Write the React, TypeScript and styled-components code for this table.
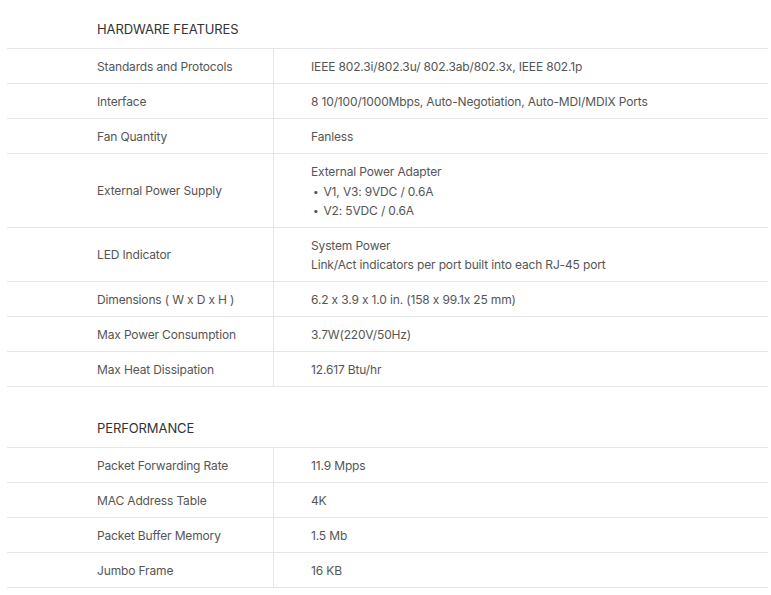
import React from 'react';
import styled, { createGlobalStyle } from 'styled-components';

interface Spec {
  label: string;
  lines: string[];
  bullets?: string[];
}

interface Section {
  title: string;
  specs: Spec[];
}

const sections: Section[] = [
  {
    title: 'HARDWARE FEATURES',
    specs: [
      { label: 'Standards and Protocols', lines: ['IEEE 802.3i/802.3u/ 802.3ab/802.3x, IEEE 802.1p'] },
      { label: 'Interface', lines: ['8 10/100/1000Mbps, Auto-Negotiation, Auto-MDI/MDIX Ports'] },
      { label: 'Fan Quantity', lines: ['Fanless'] },
      {
        label: 'External Power Supply',
        lines: ['External Power Adapter'],
        bullets: ['V1, V3: 9VDC / 0.6A', 'V2: 5VDC / 0.6A'],
      },
      {
        label: 'LED Indicator',
        lines: ['System Power', 'Link/Act indicators per port built into each RJ-45 port'],
      },
      { label: 'Dimensions ( W x D x H )', lines: ['6.2 x 3.9 x 1.0 in. (158 x 99.1x 25 mm)'] },
      { label: 'Max Power Consumption', lines: ['3.7W(220V/50Hz)'] },
      { label: 'Max Heat Dissipation', lines: ['12.617 Btu/hr'] },
    ],
  },
  {
    title: 'PERFORMANCE',
    specs: [
      { label: 'Packet Forwarding Rate', lines: ['11.9 Mpps'] },
      { label: 'MAC Address Table', lines: ['4K'] },
      { label: 'Packet Buffer Memory', lines: ['1.5 Mb'] },
      { label: 'Jumbo Frame', lines: ['16 KB'] },
    ],
  },
];

const GlobalStyle = createGlobalStyle`
  body {
    margin: 0;
    background: #fff;
    font-family: Inter, 'Noto Sans', sans-serif;
  }
`;

const Page = styled.div`
  display: flex;
  flex-direction: column;
  gap: 21px;
  padding: 9px 3px 0 7px;
`;

const Block = styled.section`
  display: flex;
  flex-direction: column;
`;

const Heading = styled.h3`
  margin: 0;
  height: 40px;
  box-sizing: border-box;
  display: flex;
  align-items: center;
  padding: 1px 0 0 90px;
  font-size: 13px;
  font-weight: 400;
  color: #333;
  letter-spacing: -0.1px;
  border-bottom: 1px solid #e6e6ea;
`;

const Row = styled.div`
  display: grid;
  grid-template-columns: 267px 1fr;
  border-bottom: 1px solid #e6e6ea;
  font-size: 12px;
  line-height: 19px;
  color: #555;
  letter-spacing: -0.15px;
`;

const Label = styled.div`
  display: flex;
  align-items: center;
  padding: 7.5px 0 7.5px 90px;
  border-right: 1px solid #e6e6ea;
`;

const Value = styled.div`
  display: flex;
  flex-direction: column;
  justify-content: center;
  padding: 7.5px 0 7.5px 37px;
`;

const Bullets = styled.ul`
  margin: 1px 0 0;
  padding: 0;
  list-style: none;
`;

const Bullet = styled.li`
  display: flex;
  gap: 5px;
  &::before {
    content: '•';
    padding-left: 2px;
    font-size: 10px;
  }
`;

export default function App() {
  return (
    <>
      <GlobalStyle />
      <Page>
        {sections.map((section) => (
          <Block key={section.title}>
            <Heading>{section.title}</Heading>
            {section.specs.map((spec) => (
              <Row key={spec.label}>
                <Label>{spec.label}</Label>
                <Value>
                  {spec.lines.map((line) => (
                    <div key={line}>{line}</div>
                  ))}
                  {spec.bullets && (
                    <Bullets>
                      {spec.bullets.map((b) => (
                        <Bullet key={b}>{b}</Bullet>
                      ))}
                    </Bullets>
                  )}
                </Value>
              </Row>
            ))}
          </Block>
        ))}
      </Page>
    </>
  );
}
